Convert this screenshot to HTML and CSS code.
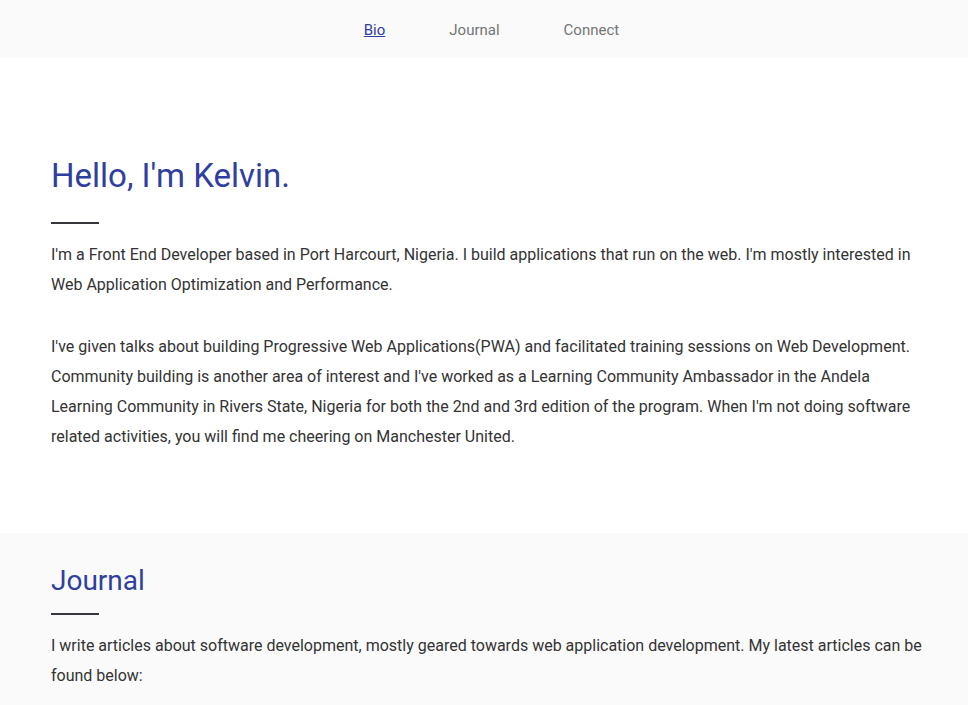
FILE: index.html
```html
<!DOCTYPE html>
<html lang="en">
<head>
<meta charset="utf-8">
<title>Kelvin</title>
<link rel="stylesheet" href="styles.css">
</head>
<body>
<header class="topbar">
  <nav class="nav">
    <a class="nav-link nav-link--active" href="#bio">Bio</a>
    <a class="nav-link" href="#journal">Journal</a>
    <a class="nav-link" href="#connect">Connect</a>
  </nav>
</header>
<main>
  <section class="section section--bio" id="bio">
    <h1 class="title">Hello, I'm Kelvin.</h1>
    <div class="rule"></div>
    <p class="text">I'm a Front End Developer based in Port Harcourt, Nigeria. I build applications that run on the web. I'm mostly interested in Web Application Optimization and Performance.</p>
    <p class="text">I've given talks about building Progressive Web Applications(PWA) and facilitated training sessions on Web Development. Community building is another area of interest and I've worked as a Learning Community Ambassador in the Andela Learning Community in Rivers State, Nigeria for both the 2nd and 3rd edition of the program. When I'm not doing software related activities, you will find me cheering on Manchester United.</p>
  </section>
  <section class="section section--journal" id="journal">
    <h2 class="subtitle">Journal</h2>
    <div class="rule"></div>
    <p class="text">I write articles about software development, mostly geared towards web application development. My latest articles can be found below:</p>
  </section>
</main>
</body>
</html>
```
FILE: styles.css
```css
* { box-sizing: border-box; }
html, body { margin: 0; padding: 0; }
body {
  font-family: Roboto, "Noto Sans", "Liberation Sans", sans-serif;
  background: #ffffff;
  color: #333333;
}
.topbar {
  background: #fafafa;
  height: 58px;
  padding-top: 1px;
  display: flex;
  align-items: center;
  justify-content: center;
}
.nav {
  display: flex;
  gap: 64px;
  padding-left: 15px;
}
.nav-link {
  font-size: 15px;
  color: #757575;
  text-decoration: none;
}
.nav-link--active {
  color: #303f9f;
  text-decoration: underline;
}
.section {
  padding: 0 45px 0 51px;
}
.section--bio {
  padding-top: 98px;
  padding-bottom: 81px;
}
.section--journal {
  background: #fafafa;
  padding-top: 31px;
  padding-bottom: 40px;
}
.title {
  margin: 0;
  font-size: 33px;
  line-height: 1.2;
  font-weight: 400;
  color: #303f9f;
}
.subtitle {
  margin: 0;
  font-size: 28px;
  line-height: 1.2;
  font-weight: 400;
  color: #303f9f;
}
.section--bio .rule { margin-top: 26px; }
.section--journal .rule { margin-top: 16px; }
.rule {
  width: 48px;
  height: 2px;
  background: #35373d;
  margin-bottom: 16px;
}
.text {
  margin: 0;
  font-size: 16px;
  line-height: 30px;
  color: #333333;
}
.text + .text { margin-top: 32px; }
```
